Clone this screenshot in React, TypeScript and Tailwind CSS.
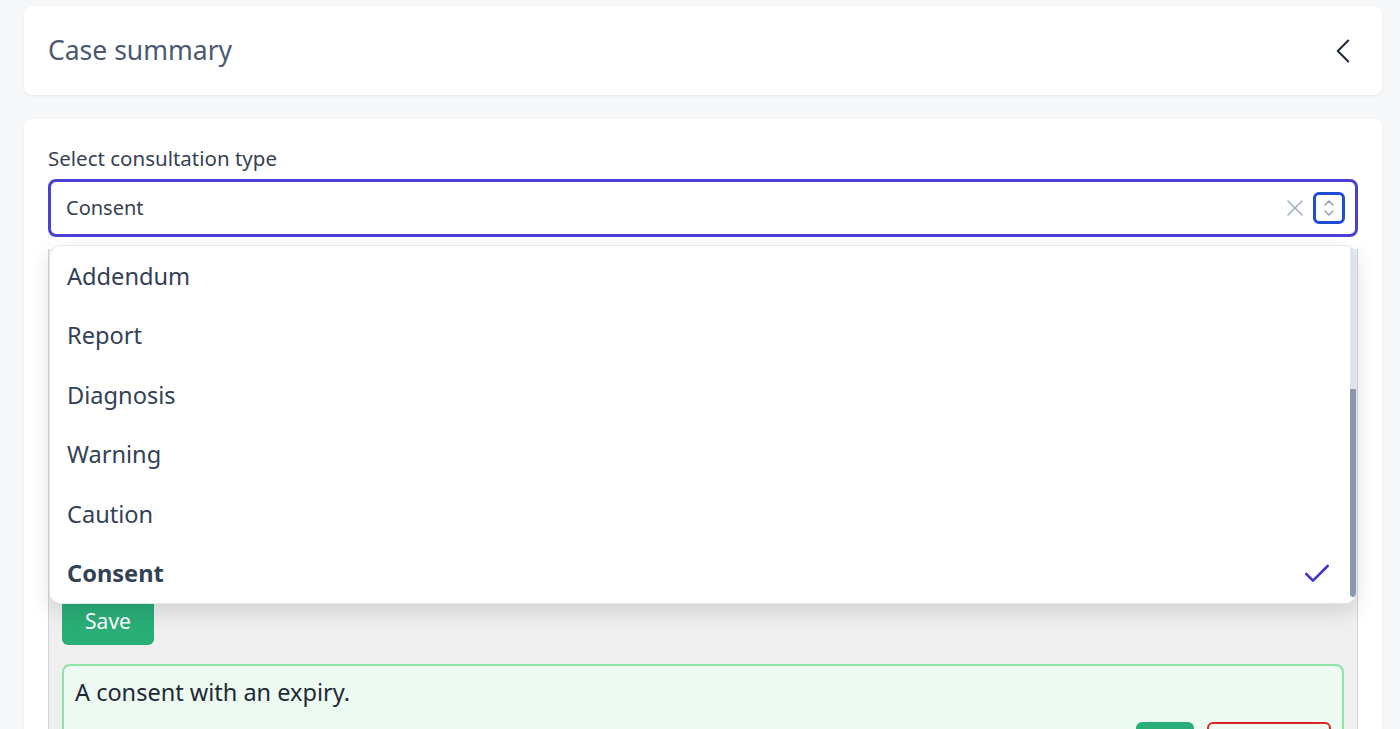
import { Check, ChevronLeft, X } from 'lucide-react';

const options = ['Addendum', 'Report', 'Diagnosis', 'Warning', 'Caution', 'Consent'];

function UpDownIcon() {
  return (
    <svg width="14" height="22" viewBox="0 0 14 22" fill="none" stroke="#94a3b8" strokeWidth="1.6" strokeLinecap="round" strokeLinejoin="round">
      <path d="M3 8 L7 4 L11 8" />
      <path d="M3 14 L7 18 L11 14" />
    </svg>
  );
}

export default function App() {
  const selected = 'Consent';

  return (
    <div className="min-h-screen bg-[#f6f7f9] pl-6 pr-[18px] pt-1.5 font-['Noto_Sans',sans-serif]">
      {/* Header card */}
      <div className="flex h-[89px] items-center justify-between rounded-lg bg-white px-6 shadow-[0_1px_3px_rgba(0,0,0,0.06)]">
        <h1 className="text-[26.5px] text-[#4a5870]">Case summary</h1>
        <ChevronLeft className="-mr-1.5 h-[42px] w-[42px] text-[#1f2937]" strokeWidth={1.15} />
      </div>

      {/* Consultation card */}
      <div className="mt-6 rounded-lg bg-white px-6 pt-[26px] shadow-[0_1px_3px_rgba(0,0,0,0.06)]">
        <label className="block text-[20.5px] leading-[26px] text-[#374151]">Select consultation type</label>

        <div className="relative mt-2">
          <div className="flex h-[58px] items-center rounded-lg border-[3px] border-[#4a3fd8] pl-[15px] pr-[10px]">
            <span className="flex-1 text-[20px] text-[#374151]">{selected}</span>
            <X className="mr-1 h-7 w-7 text-[#a0aec0]" strokeWidth={1.3} />
            <div className="flex h-8 w-8 items-center justify-center rounded-md border-[3px] border-[#1d4ed8]">
              <UpDownIcon />
            </div>
          </div>

          {/* Options menu */}
          <div className="absolute left-px right-px top-[66px] z-10 flex overflow-hidden rounded-xl border border-[#e2e8f0] bg-white shadow-[0_8px_20px_rgba(0,0,0,0.12)]">
            <ul className="flex-1 pt-px">
              {options.map((o) => (
                <li
                  key={o}
                  className={`flex h-[59.4px] items-center justify-between pl-[17px] pr-[17px] text-[23.6px] text-[#334155] ${
                    o === selected ? 'font-bold' : ''
                  }`}
                >
                  {o}
                  {o === selected && <Check className="h-8 w-8 text-[#4338ca]" strokeWidth={2} />}
                </li>
              ))}
            </ul>
            <div className="flex w-[6px] flex-col">
              <div className="h-[143px] bg-[#dde3ec]" />
              <div className="mb-[6px] flex-1 rounded-b bg-[#8b97ad]" />
            </div>
          </div>
        </div>

        {/* Consultation entry panel */}
        <div className="mt-3 border-x border-[#d4d4d8] bg-[#efefef] px-[13px] pt-3 pb-6">
          <div className="h-[326px] rounded-lg bg-white" />
          <button className="mt-[12px] h-[46px] w-[92px] rounded-md bg-[#2aae78] text-[21px] text-white">Save</button>
          <div className="mt-[19px] rounded-lg border-2 border-[#8ee3a9] bg-[#edfaf1] px-[11px] pt-[8px] pb-3">
            <p className="text-[23.5px] leading-[36px] text-[#1f2937]">A consent with an expiry.</p>
            <div className="mt-3 flex justify-end gap-[13px]">
              <button className="h-[56px] w-[58px] rounded-md bg-[#2aae78] text-white">Edit</button>
              <button className="h-[56px] w-[124px] rounded-md border-2 border-[#dc2626] text-[#dc2626]">Delete</button>
            </div>
          </div>
        </div>
      </div>
    </div>
  );
}
